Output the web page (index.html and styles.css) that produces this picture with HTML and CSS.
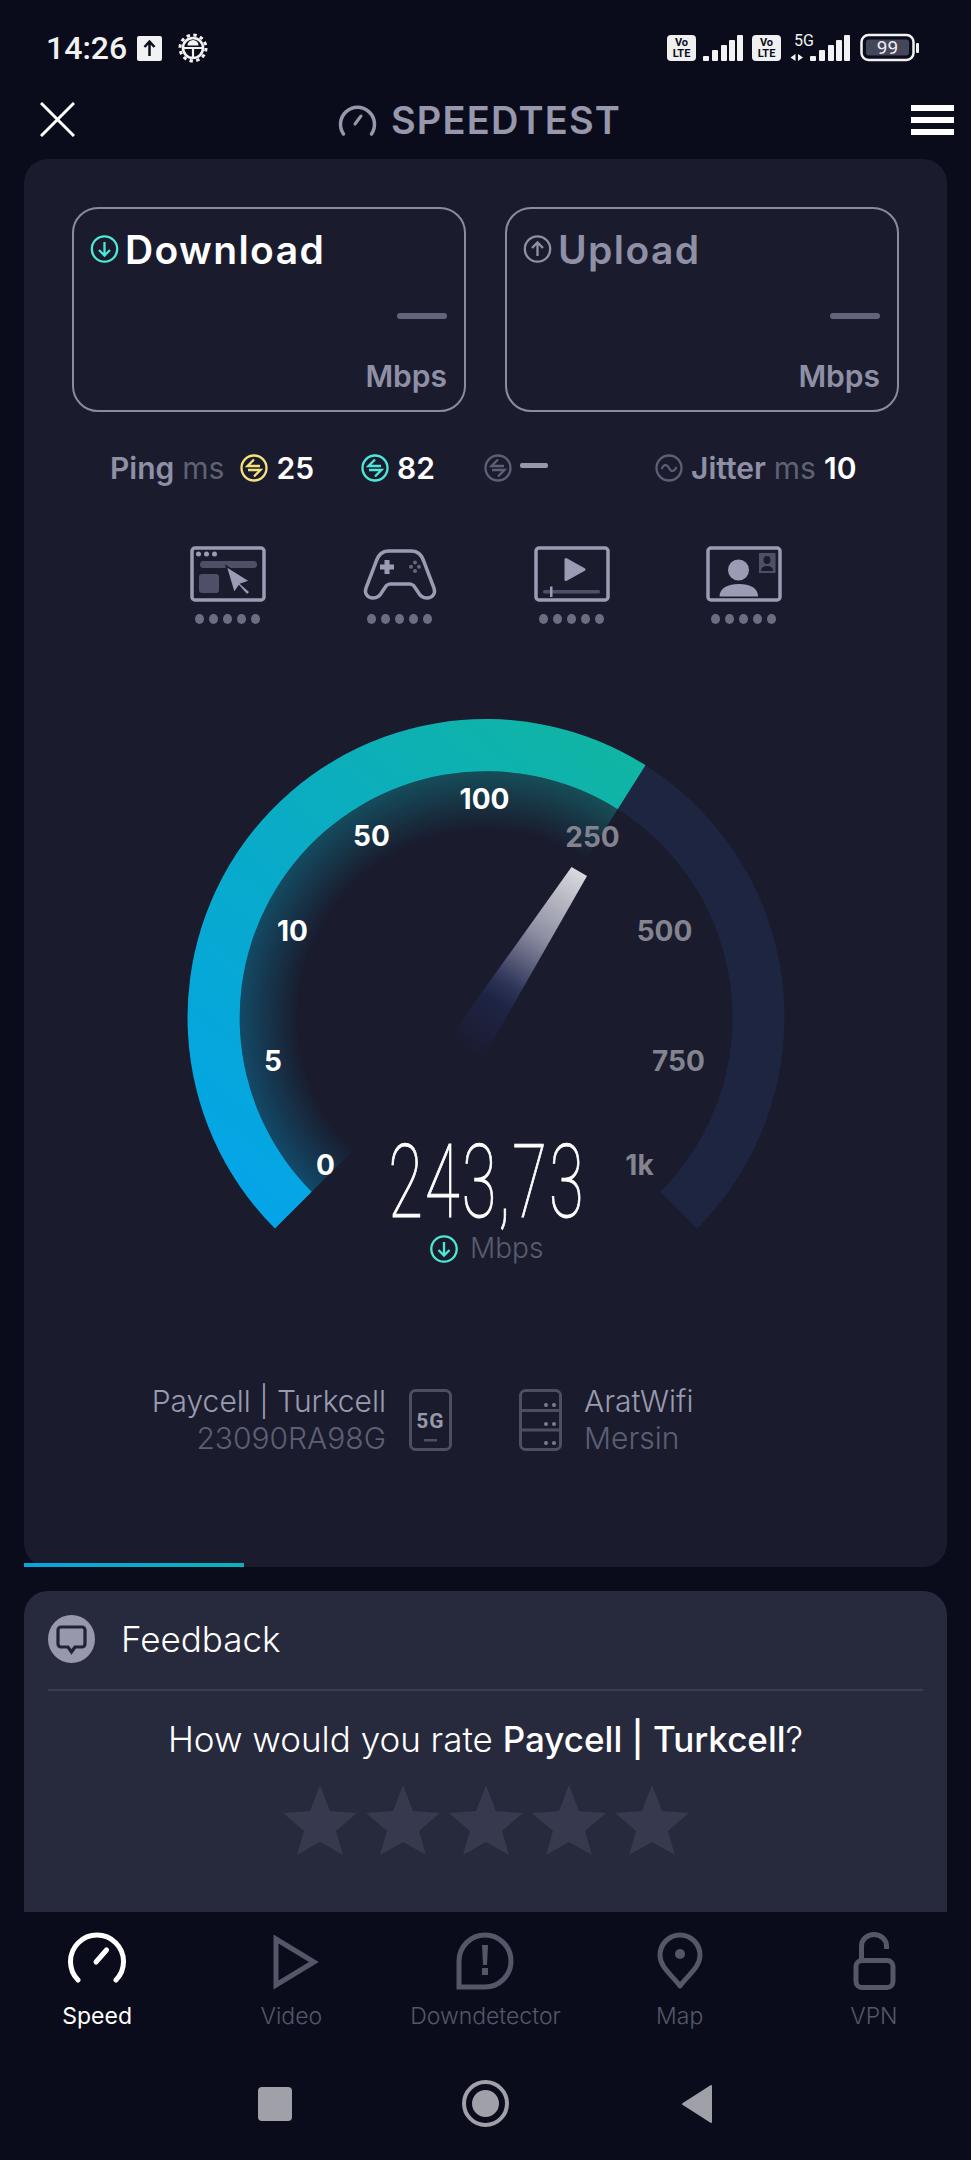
FILE: index.html
```html
<!DOCTYPE html>
<html>
	<head>
		<meta charset="UTF-8">
		<title>Speedtest</title>
		<link rel="stylesheet" href="styles.css">
	</head>
	<body>
		<div class="screen">
			<!--status bar-->
			<div class="status">
				<div class="status-left">
					<span class="clock">14:26</span>
					<svg class="up-box" width="25" height="25" viewBox="0 0 25 25">
						<rect width="25" height="25" rx="2" fill="#f2f2f2"/>
						<path d="M12.500 20V6M7.500 11l5-5.500 5 5.500" fill="none" stroke="#0a0c1c" stroke-width="2.500"/>
					</svg>
					<svg class="gear" width="30" height="30" viewBox="0 0 30 30">
						<circle cx="15" cy="15" r="13" fill="none" stroke="#f2f2f2" stroke-width="3" stroke-dasharray="3.400 3.400"/>
						<circle cx="15" cy="15" r="10" fill="#0a0c1c" stroke="#f2f2f2" stroke-width="2.600"/>
						<path d="M5 15h20M15 15v9" stroke="#f2f2f2" stroke-width="2.200"/>
						<path d="M9.500 12.500a5.500 5.500 0 0 1 11 0z" fill="#f2f2f2"/>
					</svg>
				</div>
				<svg class="status-right" width="253" height="40" viewBox="0 -5 253 40">
					<rect x="1" y="2" width="29" height="26" rx="4" fill="#f0f0f0"/>
					<text class="volte" x="15.500" y="13">Vo</text>
					<text class="volte" x="15.500" y="24">LTE</text>
					<g fill="#f2f2f2">
						<rect x="37" y="23" width="6" height="5" rx="1"/>
						<rect x="46" y="17" width="6" height="11" rx="1"/>
						<rect x="55" y="12" width="6" height="16" rx="1"/>
						<rect x="63" y="7" width="6" height="21" rx="1"/>
						<rect x="71" y="2" width="6" height="26" rx="1"/>
					</g>
					<rect x="86" y="2" width="29" height="26" rx="4" fill="#f0f0f0"/>
					<text class="volte" x="100.500" y="13">Vo</text>
					<text class="volte" x="100.500" y="24">LTE</text>
					<text class="five-g" x="128" y="13">5G</text>
					<g fill="#f2f2f2">
						<path d="M129.500 21v7l-5-3.500zM132 21v7l5-3.500z"/>
						<rect x="144" y="23" width="6" height="5" rx="1"/>
						<rect x="153" y="17" width="6" height="11" rx="1"/>
						<rect x="162" y="12" width="6" height="16" rx="1"/>
						<rect x="170" y="7" width="6" height="21" rx="1"/>
						<rect x="178" y="2" width="6" height="26" rx="1"/>
					</g>
					<rect x="195.500" y="2" width="52" height="25" rx="7" fill="none" stroke="#f2f2f2" stroke-width="2.500"/>
					<rect x="200" y="6.500" width="43" height="16" rx="3" fill="#45465a"/>
					<rect x="250" y="10" width="3" height="10" rx="1" fill="#f2f2f2"/>
					<text class="battery" x="221.500" y="21">99</text>
				</svg>
			</div>

			<!--title bar-->
			<div class="topbar">
				<svg width="35" height="35" viewBox="0 0 35 35">
					<path d="M1 1l33 33M34 1L1 34" stroke="#fff" stroke-width="3"/>
				</svg>
				<div class="brand">
					<svg width="39" height="34" viewBox="0 0 39 34">
						<path d="M5.500 31A17 17 0 1 1 33.500 31" fill="none" stroke="#9798ac" stroke-width="3.500" stroke-linecap="round"/>
						<path d="M17 21l6-8" stroke="#9798ac" stroke-width="3" stroke-linecap="round"/>
					</svg>
					<span class="brand-name">SPEEDTEST</span>
				</div>
				<div class="burger"><span></span><span></span><span></span></div>
			</div>

			<!--main card-->
			<div class="card">
				<div class="boxes">
					<div class="box">
						<div class="box-title">
							<svg width="29" height="28" viewBox="0 0 29 28">
								<circle cx="14.500" cy="14" r="12.700" fill="none" stroke="#4de8d8" stroke-width="2.300"/>
								<path d="M14.500 7v13M9 15l5.500 5.500L20 15" fill="none" stroke="#4de8d8" stroke-width="2.300"/>
							</svg>
							<span>Download</span>
						</div>
						<div class="box-dash"></div>
						<div class="box-unit">Mbps</div>
					</div>
					<div class="box box-off">
						<div class="box-title">
							<svg width="29" height="28" viewBox="0 0 29 28">
								<circle cx="14.500" cy="14" r="12.700" fill="none" stroke="#8f90a6" stroke-width="2.300"/>
								<path d="M14.500 21V8M9 13l5.500-5.500L20 13" fill="none" stroke="#8f90a6" stroke-width="2.300"/>
							</svg>
							<span>Upload</span>
						</div>
						<div class="box-dash"></div>
						<div class="box-unit">Mbps</div>
					</div>
				</div>

				<div class="metrics">
					<div class="metric">
						<span class="metric-name">Ping</span>
						<span class="metric-unit">ms</span>
						<svg class="metric-icon" width="28" height="28" viewBox="0 0 28 28">
							<circle cx="14" cy="14" r="12.500" fill="none" stroke="#f5e27a" stroke-width="2.300"/>
							<path d="M20 12H7.500L14 5.500M8 16h12.500L14 22.500" fill="none" stroke="#f5e27a" stroke-width="2.300"/>
						</svg>
						<span class="metric-value">25</span>
					</div>
					<div class="metric">
						<svg width="28" height="28" viewBox="0 0 28 28">
							<circle cx="14" cy="14" r="12.500" fill="none" stroke="#4de8d8" stroke-width="2.300"/>
							<path d="M20 12H7.500L14 5.500M8 16h12.500L14 22.500" fill="none" stroke="#4de8d8" stroke-width="2.300"/>
						</svg>
						<span class="metric-value">82</span>
					</div>
					<div class="metric">
						<svg width="28" height="28" viewBox="0 0 28 28">
							<circle cx="14" cy="14" r="12.500" fill="none" stroke="#5d5f74" stroke-width="2.300"/>
							<path d="M20 12H7.500L14 5.500M8 16h12.500L14 22.500" fill="none" stroke="#5d5f74" stroke-width="2.300"/>
						</svg>
						<span class="metric-dash"></span>
					</div>
					<div class="metric">
						<svg width="28" height="28" viewBox="0 0 28 28">
							<circle cx="14" cy="14" r="12.500" fill="none" stroke="#5d5f74" stroke-width="2.300"/>
							<path d="M6.500 15C9 9.500 12 10 14 14s5 4.500 7.500-1" fill="none" stroke="#5d5f74" stroke-width="2"/>
						</svg>
						<span class="metric-name">Jitter</span>
						<span class="metric-unit">ms</span>
						<span class="metric-value">10</span>
					</div>
				</div>

				<!--quality icons-->
				<div class="quality">
					<div class="quality-item">
						<svg width="76" height="56" viewBox="0 0 76 56">
							<rect x="2" y="2" width="72" height="52" rx="3" fill="none" stroke="#9b9cb3" stroke-width="3.500"/>
							<circle cx="8.500" cy="8" r="2.500" fill="#9b9cb3"/>
							<circle cx="16.500" cy="8" r="2.500" fill="#9b9cb3"/>
							<circle cx="24.500" cy="8" r="2.500" fill="#9b9cb3"/>
							<rect x="10" y="15" width="57" height="7" rx="3.500" fill="#4f5068"/>
							<rect x="9" y="28" width="20" height="19" rx="3" fill="#4f5068"/>
							<path d="M36 20l24 15-9 3 9 8-3 3-8-9-5 7z" fill="#9b9cb3" stroke="#1a1c2e" stroke-width="1.500"/>
						</svg>
						<div class="dots"><i></i><i></i><i></i><i></i><i></i></div>
					</div>
					<div class="quality-item">
						<svg width="76" height="56" viewBox="0 0 76 56">
							<path d="M27 5H49C56 5 60 9 62 16L72 42C74 48 70 52 65 52C61 52 58 50 56 46L52 40C51 39 50 38 48 38H28C26 38 25 39 24 40L20 46C18 50 15 52 11 52C6 52 2 48 4 42L14 16C16 9 20 5 27 5Z" fill="none" stroke="#9b9cb3" stroke-width="3.500"/>
							<path d="M25 14v14M18 21h14" stroke="#9b9cb3" stroke-width="5"/>
							<g fill="#65667c">
								<circle cx="53" cy="16.500" r="2"/>
								<circle cx="53" cy="25" r="2"/>
								<circle cx="49" cy="20.700" r="2"/>
								<circle cx="57" cy="20.700" r="2"/>
							</g>
						</svg>
						<div class="dots"><i></i><i></i><i></i><i></i><i></i></div>
					</div>
					<div class="quality-item">
						<svg width="76" height="56" viewBox="0 0 76 56">
							<rect x="2" y="2" width="72" height="52" rx="3" fill="none" stroke="#9b9cb3" stroke-width="3.500"/>
							<path d="M32 13.500L50 23.500 32 33.500z" fill="#9b9cb3" stroke="#9b9cb3" stroke-width="3" stroke-linejoin="round"/>
							<rect x="9" y="44" width="57" height="3.500" rx="1.500" fill="#4f5068"/>
							<rect x="16" y="40.500" width="2.500" height="10.500" fill="#9b9cb3"/>
						</svg>
						<div class="dots"><i></i><i></i><i></i><i></i><i></i></div>
					</div>
					<div class="quality-item">
						<svg width="76" height="56" viewBox="0 0 76 56">
							<rect x="2" y="2" width="72" height="52" rx="3" fill="none" stroke="#9b9cb3" stroke-width="3.500"/>
							<ellipse cx="32.500" cy="24" rx="10.500" ry="10.500" fill="#9b9cb3"/>
							<path d="M13.500 50.500C13.500 42 22 38 33 38S52 42 52 50.500z" fill="#9b9cb3"/>
							<rect x="53" y="7" width="16.500" height="20" fill="#4f5068"/>
							<ellipse cx="61" cy="14" rx="3.500" ry="4" fill="#1a1c2e"/>
							<path d="M55 25c0-4 3-5 6-5s6 1 6 5z" fill="#1a1c2e"/>
						</svg>
						<div class="dots"><i></i><i></i><i></i><i></i><i></i></div>
					</div>
				</div>

				<!--gauge, coordinates are relative to its centre-->
				<svg class="gauge" width="620" height="570" viewBox="-310 -310.500 620 570">
					<defs>
						<linearGradient id="progress" gradientUnits="userSpaceOnUse" x1="-211" y1="211" x2="160" y2="-252">
							<stop offset="0" stop-color="#03a5e8"/>
							<stop offset="0.5" stop-color="#09abc8"/>
							<stop offset="1" stop-color="#10b5a3"/>
						</linearGradient>
						<radialGradient id="glow" gradientUnits="userSpaceOnUse" cx="0" cy="0" r="246.500">
							<stop offset="0.76" stop-color="#000"/>
							<stop offset="1" stop-color="#555"/>
						</radialGradient>
						<mask id="glow-mask" maskUnits="userSpaceOnUse" x="-310" y="-310" width="620" height="570">
							<rect x="-310" y="-310" width="620" height="570" fill="url(#glow)"/>
						</mask>
						<linearGradient id="needle" gradientUnits="userSpaceOnUse" x1="93" y1="-146" x2="-18" y2="28">
							<stop offset="0" stop-color="#d8d8de"/>
							<stop offset="0.36" stop-color="#8e8fa3"/>
							<stop offset="0.64" stop-color="#2f3659"/>
							<stop offset="0.74" stop-color="#1e2444"/>
							<stop offset="1" stop-color="#1a1c30"/>
						</linearGradient>
					</defs>
					<path d="M-211.070 211.070A298.500 298.500 0 1 1 211.070 211.070L174.300 174.300A246.500 246.500 0 1 0 -174.300 174.300Z" fill="#1e2540"/>
					<path d="M0 0L-174.300 174.300A246.500 246.500 0 0 1 131.700 -208.300Z" fill="url(#progress)" mask="url(#glow-mask)"/>
					<path d="M-211.070 211.070A298.500 298.500 0 0 1 159.500 -252.300L131.700 -208.300A246.500 246.500 0 0 0 -174.300 174.300Z" fill="url(#progress)"/>
					<path d="M85.500 -150.500L101 -141.500L-2.500 39.500L-34.500 17.500Z" fill="url(#needle)"/>

					<text class="tick" x="-1.500" y="-208.500">100</text>
					<text class="tick" x="-114.500" y="-171.500">50</text>
					<text class="tick" x="-193.500" y="-76.500">10</text>
					<text class="tick" x="-213" y="53.500">5</text>
					<text class="tick" x="-160.500" y="157.500">0</text>
					<text class="tick tick-off" x="106.500" y="-170.500">250</text>
					<text class="tick tick-off" x="178.500" y="-76.500">500</text>
					<text class="tick tick-off" x="192.500" y="53.500">750</text>
					<text class="tick tick-off" x="153.500" y="157.500">1k</text>

					<text class="speed" transform="translate(1 199.500) scale(0.62 1)">243,73</text>
					<circle cx="-42" cy="231.500" r="12.700" fill="none" stroke="#4de8d8" stroke-width="2.300"/>
					<path d="M-42 224.500v13M-47.500 232.500l5.500 5.500 5.500-5.500" fill="none" stroke="#4de8d8" stroke-width="2.300"/>
					<text class="speed-unit" x="-16" y="240">Mbps</text>
				</svg>

				<!--operator and server-->
				<div class="info">
					<div class="info-left">
						<div class="info-main">Paycell | Turkcell</div>
						<div class="info-sub">23090RA98G</div>
					</div>
					<svg class="phone" width="43" height="62" viewBox="0 0 43 62">
						<rect x="1.500" y="1.500" width="40" height="59" rx="5" fill="none" stroke="#4c4e64" stroke-width="3"/>
						<text class="phone-text" x="21.500" y="39">5G</text>
						<rect x="15" y="50" width="13" height="2.500" fill="#4c4e64"/>
					</svg>
					<svg class="server" width="43" height="62" viewBox="0 0 43 62">
						<rect x="1.500" y="1.500" width="40" height="59" rx="5" fill="none" stroke="#4c4e64" stroke-width="3"/>
						<path d="M1.500 21.500h40M1.500 41h40" stroke="#4c4e64" stroke-width="3"/>
						<g fill="#7b7c90">
							<circle cx="27" cy="16" r="2"/><circle cx="35" cy="16" r="2"/>
							<circle cx="27" cy="35" r="2"/><circle cx="35" cy="35" r="2"/>
							<circle cx="27" cy="54" r="2"/><circle cx="35" cy="54" r="2"/>
						</g>
					</svg>
					<div class="info-right">
						<div class="info-main">AratWifi</div>
						<div class="info-sub">Mersin</div>
					</div>
				</div>

				<div class="strip"></div>
			</div>

			<!--feedback card-->
			<div class="feedback">
				<div class="feedback-head">
					<svg width="47" height="48" viewBox="0 0 47 48">
						<ellipse cx="23.500" cy="24" rx="23.500" ry="24" fill="#9798ac"/>
						<path d="M13 12h21a3 3 0 0 1 3 3v14a3 3 0 0 1-3 3h-7l-3.500 5-3.500-5h-7a3 3 0 0 1-3-3V15a3 3 0 0 1 3-3z" fill="#9798ac" stroke="#20223a" stroke-width="3.200"/>
					</svg>
					<span class="feedback-title">Feedback</span>
				</div>
				<div class="question">How would you rate <b>Paycell | Turkcell</b>?</div>
				<div class="stars">
					<svg width="74" height="70" viewBox="0 0 74 70"><path d="M37 0l10 26 27 2-21 18 7 24-23-13-23 13 7-24L0 28l27-2z" fill="#37394f"/></svg>
					<svg width="74" height="70" viewBox="0 0 74 70"><path d="M37 0l10 26 27 2-21 18 7 24-23-13-23 13 7-24L0 28l27-2z" fill="#37394f"/></svg>
					<svg width="74" height="70" viewBox="0 0 74 70"><path d="M37 0l10 26 27 2-21 18 7 24-23-13-23 13 7-24L0 28l27-2z" fill="#37394f"/></svg>
					<svg width="74" height="70" viewBox="0 0 74 70"><path d="M37 0l10 26 27 2-21 18 7 24-23-13-23 13 7-24L0 28l27-2z" fill="#37394f"/></svg>
					<svg width="74" height="70" viewBox="0 0 74 70"><path d="M37 0l10 26 27 2-21 18 7 24-23-13-23 13 7-24L0 28l27-2z" fill="#37394f"/></svg>
				</div>
			</div>

			<!--bottom tabs-->
			<div class="tabs">
				<div class="tab tab-on">
					<svg width="58" height="58" viewBox="0 0 58 58">
						<path d="M10 48A26.500 26.500 0 1 1 48 48" fill="none" stroke="#fff" stroke-width="5" stroke-linecap="round"/>
						<path d="M28 30l10.500-12" stroke="#fff" stroke-width="5" stroke-linecap="round"/>
					</svg>
					<span>Speed</span>
				</div>
				<div class="tab">
					<svg width="58" height="58" viewBox="0 0 58 58">
						<path d="M14 7V53L52 30Z" fill="none" stroke="#555768" stroke-width="5"/>
					</svg>
					<span>Video</span>
				</div>
				<div class="tab">
					<svg width="58" height="58" viewBox="0 0 58 58">
						<path d="M3 29A26 26 0 1 1 29 55H3Z" fill="none" stroke="#555768" stroke-width="5"/>
						<path d="M26 13h6l-1 20h-4zM26 36h6v7h-6z" fill="#555768"/>
					</svg>
					<span>Downdetector</span>
				</div>
				<div class="tab">
					<svg width="58" height="58" viewBox="0 0 58 58">
						<path d="M29 54C20 42 9 35 9 23A20 20 0 0 1 49 23C49 35 38 42 29 54Z" fill="none" stroke="#555768" stroke-width="5" stroke-linejoin="round"/>
						<circle cx="29" cy="22" r="5" fill="#555768"/>
					</svg>
					<span>Map</span>
				</div>
				<div class="tab">
					<svg width="58" height="58" viewBox="0 0 58 58">
						<rect x="11" y="28.500" width="37" height="27" rx="6" fill="none" stroke="#555768" stroke-width="5"/>
						<path d="M16.500 27V14A12.500 11.500 0 0 1 41.500 14V17" fill="none" stroke="#555768" stroke-width="5"/>
					</svg>
					<span>VPN</span>
				</div>
			</div>

			<!--system buttons-->
			<div class="sysnav">
				<svg width="34" height="34" viewBox="0 0 34 34"><rect width="34" height="34" rx="4" fill="#a0a0a8"/></svg>
				<svg width="47" height="47" viewBox="0 0 47 47">
					<circle cx="23.500" cy="23.500" r="21.500" fill="none" stroke="#a0a0a8" stroke-width="4"/>
					<circle cx="23.500" cy="23.500" r="13.500" fill="#a0a0a8"/>
				</svg>
				<svg width="32" height="40" viewBox="0 0 32 40"><path d="M30 2V38L2 20Z" fill="#a0a0a8" stroke="#a0a0a8" stroke-width="2" stroke-linejoin="round"/></svg>
			</div>
		</div>
	</body>
</html>
```

FILE: styles.css
```css
*{
	margin: 0px;
	padding: 0px;
	box-sizing: border-box;
}

body{
	background-color: #0a0c1c;
	font-family: "Inter", "Liberation Sans", sans-serif;
}

.screen{
	width: 971px;
	height: 2160px;
	overflow: hidden;
	display: flex;
	flex-direction: column;
	background-color: #0a0c1c;
}

svg{
	display: block;
	flex-shrink: 0;
}

/*status bar*/
.status{
	height: 96px;
	flex-shrink: 0;
	padding: 0 52px 0 46px;
	display: flex;
	align-items: center;
	justify-content: space-between;
}

.status-left{
	display: flex;
	align-items: center;
}

.clock{
	font-family: "Roboto", sans-serif;
	font-size: 32px;
	font-weight: 500;
	color: #f2f2f2;
	width: 91px;
}

.gear{
	margin-left: 16px;
}

.volte{
	font-family: "Roboto", sans-serif;
	font-size: 11px;
	font-weight: 700;
	fill: #0a0c1c;
	text-anchor: middle;
}

.five-g{
	font-family: "Roboto", sans-serif;
	font-size: 16px;
	fill: #f2f2f2;
}

.battery{
	font-family: "Roboto", sans-serif;
	font-size: 19px;
	fill: #eee;
	text-anchor: middle;
}

/*title bar*/
.topbar{
	height: 63px;
	flex-shrink: 0;
	padding: 0 17px 16px 40px;
	display: flex;
	align-items: center;
	justify-content: space-between;
}

.brand{
	display: flex;
	align-items: center;
	gap: 14px;
	margin-right: 27px;
}

.brand-name{
	font-size: 38px;
	font-weight: 600;
	letter-spacing: 1.200px;
	line-height: 34px;
	color: #9798ac;
}

.burger{
	width: 43px;
	display: flex;
	flex-direction: column;
	gap: 6px;
}

.burger span{
	height: 6px;
	background-color: #fff;
}

/*main card*/
.card{
	height: 1408px;
	flex-shrink: 0;
	margin: 0 24px;
	padding-top: 48px;
	border-radius: 24px;
	background-color: #1a1c2e;
	display: flex;
	flex-direction: column;
}

.boxes{
	display: flex;
	gap: 39px;
	padding: 0 48px;
}

.box{
	width: 394px;
	height: 205px;
	padding: 26px 17px 0 16px;
	border: solid 2px #8a8ba0;
	border-radius: 26px;
	display: flex;
	flex-direction: column;
}

.box-title{
	display: flex;
	align-items: center;
	gap: 6px;
	height: 28px;
	font-size: 39px;
	font-weight: 600;
	letter-spacing: 1.400px;
	color: #fff;
}

.box-off .box-title{
	color: #8f90a6;
}

.box-dash{
	align-self: flex-end;
	width: 50px;
	height: 6px;
	margin-top: 50px;
	border-radius: 3px;
	background-color: #62647a;
}

.box-unit{
	align-self: flex-end;
	margin-top: 43px;
	line-height: 28px;
	font-size: 30px;
	font-weight: 600;
	color: #8f90a6;
}

/*ping row*/
.metrics{
	margin-top: 42px;
	padding-left: 86px;
	display: grid;
	grid-template-columns: 251px 123px 171px auto;
}

.metric{
	display: flex;
	align-items: center;
	gap: 8px;
	height: 28px;
	font-size: 30px;
	line-height: 28px;
}

.metric-name{
	font-weight: 600;
	color: #8f90a6;
}

.metric-unit{
	font-weight: 400;
	color: #5f6175;
}

.metric-value{
	font-weight: 600;
	color: #fff;
}

.metric-icon{
	margin-left: 8px;
}

.metric-dash{
	width: 28px;
	height: 5px;
	margin-bottom: 6px;
	border-radius: 2px;
	background-color: #9798ac;
}

/*quality icons*/
.quality{
	margin-top: 64px;
	display: flex;
	justify-content: center;
}

.quality-item{
	width: 172px;
	display: flex;
	flex-direction: column;
	align-items: center;
}

.dots{
	margin-top: 12px;
	display: flex;
	gap: 5px;
}

.dots i{
	width: 9px;
	height: 10px;
	border-radius: 50%;
	background-color: #6c6d82;
}

/*gauge*/
.gauge{
	align-self: center;
	margin-top: 83px;
}

.tick{
	font-size: 28px;
	font-weight: 700;
	fill: #fff;
	text-anchor: middle;
}

.tick-off{
	fill: #83848f;
}

.speed{
	font-family: "Roboto", sans-serif;
	font-size: 102px;
	font-weight: 100;
	letter-spacing: 3.400px;
	fill: #fff;
	stroke: #fff;
	stroke-width: 1px;
	text-anchor: middle;
}

.speed-unit{
	font-size: 28px;
	font-weight: 300;
	fill: #5a5c70;
}

/*operator and server*/
.info{
	margin-top: 106px;
	height: 74px;
	display: flex;
	align-items: center;
}

.info-main,
.info-sub{
	font-size: 30px;
	font-weight: 300;
	line-height: 37px;
	white-space: nowrap;
}

.info-main{
	color: #9a9bb0;
}

.info-sub{
	color: #5d5f74;
}

.info-left{
	width: 362px;
	text-align: right;
}

.phone{
	margin-left: 23px;
}

.phone-text{
	font-family: "Roboto", sans-serif;
	font-size: 21px;
	font-weight: 700;
	letter-spacing: 1px;
	fill: #9798ac;
	text-anchor: middle;
}

.server{
	margin-left: 67px;
}

.info-right{
	margin-left: 22px;
}

.strip{
	width: 220px;
	height: 4px;
	margin-top: auto;
	background: linear-gradient(to right, #08a5dc, #0cb0bb);
}

/*feedback card*/
.feedback{
	height: 321px;
	flex-shrink: 0;
	margin: 24px 24px 0;
	padding: 24px 24px 0;
	border-radius: 24px 24px 0 0;
	background-color: #27293d;
}

.feedback-head{
	display: flex;
	align-items: center;
	gap: 26px;
	height: 76px;
	padding-bottom: 26px;
	border-bottom: solid 2px #3a3c50;
}

.feedback-title{
	font-size: 35px;
	font-weight: 300;
	color: #fff;
}

.question{
	margin-top: 28px;
	line-height: 40px;
	font-size: 35px;
	font-weight: 300;
	text-align: center;
	color: #fff;
}

.question b{
	font-weight: 500;
}

.stars{
	margin-top: 26px;
	display: flex;
	justify-content: center;
	gap: 9px;
}

/*bottom tabs*/
.tabs{
	padding-top: 20px;
	display: grid;
	grid-template-columns: repeat(5, 1fr);
	flex-shrink: 0;
}

.tab{
	display: flex;
	flex-direction: column;
	align-items: center;
	gap: 12px;
	font-size: 23px;
	font-weight: 300;
	line-height: 28px;
	color: #555768;
}

.tab-on{
	font-weight: 400;
	color: #fff;
}

/*system buttons*/
.sysnav{
	margin-top: 50px;
	display: grid;
	grid-template-columns: repeat(3, 211px);
	justify-content: center;
	justify-items: center;
	align-items: center;
}
```
